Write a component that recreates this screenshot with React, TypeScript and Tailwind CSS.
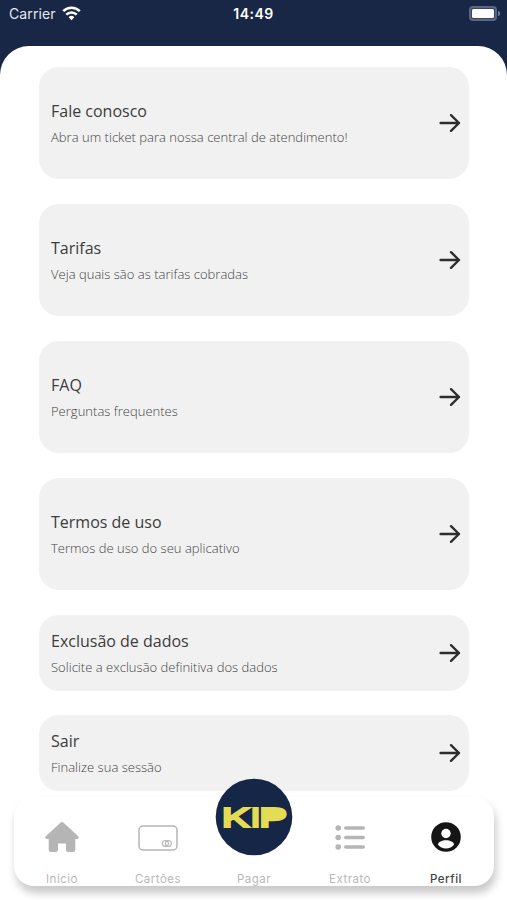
import React from 'react';

interface MenuItem {
    id: string;
    title: string;
    description: string;
    compact?: boolean;
}

interface TabProps {
    id: string;
    label: string;
    active?: boolean;
    children?: React.ReactNode;
}

const menuItems: MenuItem[] = [
    { id: 'contact', title: 'Fale conosco', description: 'Abra um ticket para nossa central de atendimento!' },
    { id: 'fees', title: 'Tarifas', description: 'Veja quais são as tarifas cobradas' },
    { id: 'faq', title: 'FAQ', description: 'Perguntas frequentes' },
    { id: 'terms', title: 'Termos de uso', description: 'Termos de uso do seu aplicativo' },
    { id: 'delete', title: 'Exclusão de dados', description: 'Solicite a exclusão definitiva dos dados', compact: true },
    { id: 'logout', title: 'Sair', description: 'Finalize sua sessão', compact: true },
];

function StatusBar() {
    return (
        <header className="grid h-[46px] grid-cols-3 items-start px-[9px] pt-[4px] font-['Inter','Liberation_Sans',sans-serif] text-white">
            <div className="flex h-5 items-center gap-[6px]">
                <span className="text-[14px] leading-5 tracking-[0.1px] text-[#e4e9f1]">Carrier</span>
                <svg className="-mt-[2px]" width="19" height="15" viewBox="0 0 19 15" fill="none" stroke="#fff" strokeWidth="2.6">
                    <path d="M1.2 5.2a11.8 11.8 0 0 1 16.6 0" />
                    <path d="M4.3 8.7a7.4 7.4 0 0 1 10.4 0" />
                    <path d="M9.5 14.2 6.6 11.2a4.1 4.1 0 0 1 5.8 0z" fill="#fff" stroke="none" />
                </svg>
            </div>
            <span className="text-center text-[14px] font-semibold leading-5 tracking-[0.5px]">14:49</span>
            <div className="-mr-[2px] flex h-[18px] items-center justify-end gap-px">
                <div className="h-[15px] w-[28px] rounded-[4px] border-2 border-[#5d6680] bg-[#3b4560] p-px">
                    <div className="h-full rounded-[1.5px] bg-white" />
                </div>
                <div className="h-[5px] w-[2px] rounded-r-full bg-[#737b92]" />
            </div>
        </header>
    );
}

function MenuCard({ item }: { item: MenuItem }) {
    return (
        <button
            id={`menu-${item.id}`}
            type="button"
            className={`flex w-full shrink-0 items-center justify-between rounded-[20px] bg-[#f1f1f1] pl-3 pr-[8px] text-left ${item.compact ? 'h-[76px]' : 'h-[112px]'}`}
        >
            <div className="pt-[2px]">
                <p className="text-[16px] leading-6 text-[#3c3c3c]">{item.title}</p>
                <p className="mt-[2px] text-[13px] font-light leading-6 tracking-[0.02px] text-[#444]">{item.description}</p>
            </div>
            <svg width="22" height="20" viewBox="0 0 22 20" fill="none" stroke="#2d2d2d" strokeWidth="2.4" strokeLinecap="round" strokeLinejoin="round">
                <path d="M1.6 10H20M12 2.2l8 7.8-8 7.8" />
            </svg>
        </button>
    );
}

function Tab(props: TabProps) {
    return (
        <button id={`tab-${props.id}`} type="button" className="flex flex-1 flex-col items-center">
            <span className="flex h-[80px] w-full items-center justify-center">{props.children}</span>
            <span className={`-mt-[5px] text-[11.5px] leading-[14px] tracking-[0.5px] ${props.active ? 'font-medium text-[#444]' : 'text-[#b8b8b8]'}`}>
                {props.label}
            </span>
        </button>
    );
}

function TabBar() {
    return (
        <nav className="absolute bottom-[14px] left-[14px] right-[13px] flex h-[89px] rounded-[20px] bg-white font-['Inter','Liberation_Sans',sans-serif] shadow-[2px_7px_9px_rgba(0,0,0,0.22)]">
            <Tab id="home" label="Início">
                <svg width="34" height="30" viewBox="0 0 34 30" fill="#b5b5b5">
                    <path d="M15.7.6a2 2 0 0 1 2.6 0L33 13.9c1.4 1.4.7 3-1 3h-1.7v10.8a2.2 2.2 0 0 1-2.2 2.2h-4.9a2.2 2.2 0 0 1-2.2-2.2v-6.2h-8v6.2a2.2 2.2 0 0 1-2.2 2.2H5.9a2.2 2.2 0 0 1-2.2-2.2V16.9H2c-1.7 0-2.4-1.6-1-3z" />
                </svg>
            </Tab>
            <Tab id="cards" label="Cartões">
                <svg className="mt-0.5" width="40" height="26" viewBox="0 0 40 26" fill="none" stroke="#b5b5b5">
                    <rect x="1" y="1" width="38" height="24" rx="4" strokeWidth="1.5" />
                    <circle cx="27.4" cy="18.5" r="3" strokeWidth="1.1" />
                    <circle cx="30.4" cy="18.5" r="3" strokeWidth="1.1" />
                </svg>
            </Tab>
            <Tab id="pay" label="Pagar">
                <svg className="relative -top-[20px] shrink-0" width="78" height="78" viewBox="0 0 78 78">
                    <circle cx="39" cy="39" r="38.3" fill="#162647" />
                    <g fill="#e5dc55" stroke="#e5dc55" strokeWidth="2" fontFamily="Inter, sans-serif" fontSize="26" fontWeight="400">
                        <text x="6.5" y="49" textLength="28.5" lengthAdjust="spacingAndGlyphs">K</text>
                        <text x="35.6" y="49" textLength="10" lengthAdjust="spacingAndGlyphs">I</text>
                        <text x="43.8" y="49" textLength="28.5" lengthAdjust="spacingAndGlyphs">P</text>
                        {/* solid bowl */}
                        <rect x="50" y="33" width="15" height="7" rx="2" />
                    </g>
                </svg>
            </Tab>
            <Tab id="statement" label="Extrato">
                <svg width="30" height="25" viewBox="0 0 30 25" fill="#b5b5b5">
                    <circle cx="3.2" cy="3" r="2.8" />
                    <circle cx="3.2" cy="12.5" r="2.8" />
                    <circle cx="3.2" cy="22" r="2.8" />
                    <rect x="9" y="1.2" width="21" height="3.6" rx="1.8" />
                    <rect x="9" y="10.7" width="21" height="3.6" rx="1.8" />
                    <rect x="9" y="20.2" width="21" height="3.6" rx="1.8" />
                </svg>
            </Tab>
            <Tab id="profile" label="Perfil" active>
                <svg width="30" height="30" viewBox="0 0 30 30">
                    <circle cx="15" cy="15" r="14.8" fill="#151515" />
                    <circle cx="15" cy="11.5" r="4.7" fill="#fff" />
                    <path d="M7 22.7c0-3 4.2-4.5 8-4.5s8 1.5 8 4.5c-1.7 2.4-4.7 3.7-8 3.7s-6.3-1.3-8-3.7z" fill="#fff" />
                </svg>
            </Tab>
        </nav>
    );
}

export default function App() {
    return (
        <div className="relative flex h-[900px] w-[507px] flex-col overflow-hidden bg-[#182746] font-['Open_Sans','Noto_Sans',sans-serif]">
            <StatusBar />
            <main className="flex flex-1 flex-col gap-[24.8px] rounded-t-[29px] bg-white pl-[39px] pr-[38px] pt-[21.4px]">
                {menuItems.map(item => (
                    <MenuCard key={item.id} item={item} />
                ))}
            </main>
            <TabBar />
        </div>
    );
}
